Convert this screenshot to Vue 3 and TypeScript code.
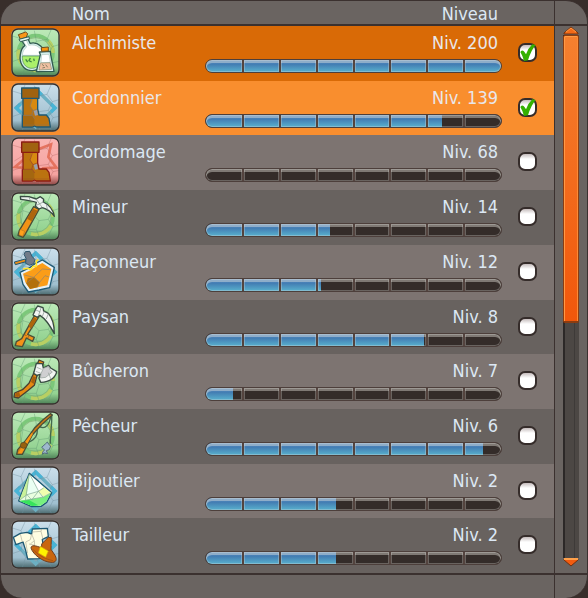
<script setup lang="ts">
import { ref } from 'vue'

type Tone = 'green' | 'blue' | 'red'

interface Shape {
  d: string
  fill?: string
  stroke?: string
  width?: number
}

interface Job {
  id: string
  name: string
  level: number
  progress: number
  tone: Tone
  shapes: Shape[]
  shown: boolean
}

const bootShapes = (line: string, seam: string): Shape[] => [
  { d: 'M36 44 H80 V78 L84 96 H106 L114 106 L118 132 H76 L70 129 L64 132 H34 V98 H36 Z', fill: '#bb7310', stroke: line, width: 4 },
  { d: 'M62 49 H78 V80 L68 84 L57 69 Z', fill: '#d88a10' },
  { d: 'M36 98 H64 L70 108 V128 L64 130 H36 Z', fill: '#a46710' },
  { d: 'M64 49 L57 69 L66 83 L62 97 M66 83 L78 78 M36 97 H64 L71 108', stroke: seam, width: 2 },
  { d: 'M68 84 L78 80 L81 96 L72 98 Z', fill: '#98a0ae' },
  { d: 'M36 126 H114', stroke: seam, width: 1 },
  { d: 'M32 15 H84 V46 H32 Z', fill: '#a06210', stroke: line, width: 4 },
]

const jobs = ref<Job[]>([
  {
    id: 'alchimiste', name: 'Alchimiste', level: 200, progress: 100, tone: 'green', shown: true,
    shapes: [
      { d: 'M30 35 L50 30 L57 46 C82 40 102 60 102 84 C102 112 82 130 60 128 C36 126 24 104 28 80 C30 66 36 56 42 52 Z', fill: '#d8f0ec', stroke: '#315a50', width: 4 },
      { d: 'M37 40 L46 37 L53 52 C78 46 94 62 95 82 L34 82 C35 70 40 62 47 57 Z', fill: '#ffffff', stroke: '#6f9c8c', width: 1 },
      { d: 'M34 84 L95 84 C94 108 78 122 60 121 C42 119 33 104 34 84 Z', fill: '#aaf06a', stroke: '#4e8860', width: 2 },
      { d: 'M44 94 L50 102 M58 90 L54 98 L62 102 M68 92 L70 99', stroke: '#3f8440', width: 4 },
      { d: 'M22 20 L44 12 L50 17 L46 28 L28 34 Z', fill: '#f99517', stroke: '#6e5020', width: 3 },
      { d: 'M24 34 L54 26 L55 34 L28 41 Z', fill: '#e0f5ef', stroke: '#315a50', width: 3 },
      { d: 'M85 72 L118 70 L119 80 L129 130 L76 131 L88 80 Z', fill: '#d8f0ec', stroke: '#315a50', width: 4 },
      { d: 'M92 80 L114 79 L118 103 L90 104 Z', fill: '#ffffff', stroke: '#6f9c8c', width: 1 },
      { d: 'M88 105 L117 104 L122 124 L84 126 Z', fill: '#efc0a2', stroke: '#8b8e72', width: 2 },
      { d: 'M93 109 L99 114 M104 110 L110 118 M94 120 L102 118', stroke: '#8a8063', width: 3 },
      { d: 'M91 59 L112 57 L112 69 L92 70 Z', fill: '#f9950f', stroke: '#6e5020', width: 3 },
    ],
  },
  { id: 'cordonnier', name: 'Cordonnier', level: 139, progress: 80, tone: 'blue', shown: true, shapes: bootShapes('#1d5874', '#7d7770') },
  { id: 'cordomage', name: 'Cordomage', level: 68, progress: 0, tone: 'red', shown: false, shapes: bootShapes('#8c1c12', '#94402c') },
  {
    id: 'mineur', name: 'Mineur', level: 14, progress: 42, tone: 'green', shown: false,
    shapes: [
      { d: 'M68 44 L84 52 L42 128 L36 136 L21 130 L25 115 Z', fill: '#f29216', stroke: '#4a4f38', width: 4 },
      { d: 'M66 50 L80 56 L62 88 L48 80 Z', fill: '#ad650d' },
      { d: 'M27 112 L41 118 L35 133 L24 128 Z', fill: '#ffa01c', stroke: '#7f5420', width: 1 },
      { d: 'M28 13 L54 14 L76 21 L88 14 L98 22 L97 30 C114 38 126 50 130 73 C118 57 106 50 94 47 L84 51 L73 42 L76 31 C60 26 44 24 29 22 Z', fill: '#eef3f0', stroke: '#384c42', width: 4 },
      { d: 'M76 22 L94 47 M76 40 L97 30 M106 38 L110 54 M54 15 L58 26', stroke: '#7b8c84', width: 2 },
    ],
  },
  {
    id: 'faconneur', name: 'Façonneur', level: 12, progress: 39, tone: 'blue', shown: false,
    shapes: [
      { d: 'M94 39 L130 61 L116 122 L84 129 L52 135 L36 112 L27 76 L56 62 L72 50 Z', fill: '#e6f1f7', stroke: '#1d5874', width: 4 },
      { d: 'M94 48 L121 66 L109 115 L80 121 L57 126 L43 106 L36 80 L62 68 L78 56 Z', fill: '#fb9d18' },
      { d: 'M50 94 L70 91 L86 106 L80 121 L57 126 L46 110 Z', fill: '#b3700c' },
      { d: 'M68 91 L94 66 M94 66 L119 68 M86 106 L102 86 L114 90 M40 84 L68 91 L86 106 L80 120 M68 91 L46 108', stroke: '#92826c', width: 2 },
      { d: 'M36 66 L50 64 L60 68 L66 58 L76 58 L76 42 L82 38', stroke: '#ffe327', width: 5 },
      { d: 'M10 45 L43 36 L45 44 L13 53 Z', fill: '#e98b18', stroke: '#1d5874', width: 3 },
      { d: 'M43 14 L56 13 L63 28 L72 38 L68 50 L56 55 L44 49 L45 34 L39 22 Z', fill: '#717b88', stroke: '#2f566c', width: 3 },
    ],
  },
  {
    id: 'paysan', name: 'Paysan', level: 8, progress: 74, tone: 'green', shown: false,
    shapes: [
      { d: 'M72 38 L84 44 L50 97 L70 106 L65 118 L46 108 L34 134 L13 131 L16 119 L32 110 Z', fill: '#f39218', stroke: '#4a4f38', width: 4 },
      { d: 'M69 46 L78 51 L62 78 L52 70 Z', fill: '#ad650d' },
      { d: 'M40 98 L47 101 M52 72 L64 80 M56 99 L50 108', stroke: '#6a5431', width: 2 },
      { d: 'M80 12 L96 17 L98 27 L112 34 C126 50 130 68 130 95 C116 68 104 51 87 40 L79 46 L66 39 L73 23 Z', fill: '#f3f5f3', stroke: '#384c42', width: 4 },
      { d: 'M90 18 L82 42 M100 28 L94 43 M112 35 L106 51 M75 24 L88 30', stroke: '#7b8c84', width: 2 },
    ],
  },
  {
    id: 'bucheron', name: 'Bûcheron', level: 7, progress: 9, tone: 'green', shown: false,
    shapes: [
      { d: 'M84 12 L98 18 L93 34 L77 62 L70 88 L52 103 L22 126 L9 123 L11 111 L36 100 L54 82 L66 56 Z', fill: '#e58a12', stroke: '#4a4032', width: 4 },
      { d: 'M66 61 L75 64 L68 84 L60 78 Z M14 112 L24 108 L28 119 L20 123 L12 120 Z', fill: '#a8600c' },
      { d: 'M76 22 L94 23 L97 36 L113 28 L119 36 L137 47 C134 64 118 78 89 79 L84 67 L88 55 L77 58 L68 52 Z', fill: '#f3f5f3', stroke: '#384c42', width: 4 },
      { d: 'M97 37 L113 31 L117 42 L124 48 L104 64 L88 66 L90 53 Z', fill: '#cfcfd1', stroke: '#8f9b96', width: 2 },
      { d: 'M77 34 L92 40 M112 50 L120 70 M74 46 L90 52', stroke: '#8f9b96', width: 2 },
    ],
  },
  {
    id: 'pecheur', name: 'Pêcheur', level: 6, progress: 94, tone: 'green', shown: false,
    shapes: [
      { d: 'M122 10 C124 40 117 66 118 98 M40 98 C70 90 82 74 78 52 M84 46 C104 58 116 40 120 12', stroke: '#43694e', width: 4 },
      { d: 'M118 8 L124 12 L95 38 L64 72 L34 130 L17 130 L20 116 L44 88 L70 52 L96 26 Z', fill: '#d07a15', stroke: '#4a4f38', width: 4 },
      { d: 'M44 90 L62 66 L66 68 L33 127 L21 127 Z', fill: '#f99716' },
      { d: 'M28 103 A10 9 0 1 0 48 103 A10 9 0 1 0 28 103', fill: '#98600f', stroke: '#4f4a29', width: 2 },
      { d: 'M104 98 L109 93 L114 101 L119 105 L115 116 L106 119 L110 128 L100 126 L94 130 L96 121 L101 117 L92 109 Z', fill: '#9eb9cd', stroke: '#526d7d', width: 3 },
    ],
  },
  {
    id: 'bijoutier', name: 'Bijoutier', level: 2, progress: 44, tone: 'blue', shown: false,
    shapes: [
      { d: 'M55 22 L122 80 L107 109 L90 121 L62 122 L23 105 Z', fill: '#e9ffe0', stroke: '#1d5874', width: 4 },
      { d: 'M54 26 L48 86 L25 103 Z', fill: '#c9f29a' },
      { d: 'M57 27 L82 76 L48 86 Z', fill: '#eafff3' },
      { d: 'M57 27 L82 76 L98 64 Z', fill: '#ffffff' },
      { d: 'M98 64 L120 80 L97 91 L82 76 Z', fill: '#f1ffae' },
      { d: 'M25 104 L58 100 L97 94 L119 82 L106 107 L89 119 L63 120 Z', fill: '#77f07f' },
      { d: 'M26 105 L54 102 L82 118 L63 120 Z', fill: '#36e45c' },
      { d: 'M55 24 L43 103 M56 24 L84 78 L97 95 M24 104 L48 86 L82 76 L98 66 M43 103 L97 93 L121 80 M48 86 L62 102 L82 76', stroke: '#7fa894', width: 2 },
    ],
  },
  {
    id: 'tailleur', name: 'Tailleur', level: 2, progress: 44, tone: 'blue', shown: false,
    shapes: [
      { d: 'M7 52 L28 40 L48 37 L62 42 L64 27 L109 25 L112 50 L94 58 L100 104 L84 116 L50 117 L44 91 L36 66 L15 74 Z', fill: '#fffde2', stroke: '#1d5874', width: 4 },
      { d: 'M28 42 L34 66 M62 42 L58 59 L44 66 M62 42 L70 62 L58 72 M70 62 L72 90 M64 36 L90 34 L96 58 M90 34 L92 27 M44 66 L50 100 M54 72 L72 76', stroke: '#b0ad9a', width: 2 },
      { d: 'M92 72 L112 52 L121 53 L120 88 L132 106 C140 120 134 129 120 127 C96 126 66 104 60 84 C60 74 74 76 92 84 Z', fill: '#c9660f', stroke: '#704024', width: 3 },
      { d: 'M92 80 C101 91 111 94 121 89 M66 88 C82 106 102 117 126 122', stroke: '#954b13', width: 2 },
      { d: 'M88 79 L112 93 L104 112 L82 99 Z', fill: '#fff200', stroke: '#d79b10', width: 2 },
    ],
  },
])

const cracks =
  'M4 24 L30 32 L42 6 M30 32 L36 56 L10 72 M36 56 L62 64 L76 40 L70 8 M76 40 L108 34 L120 6 M108 34 L124 56 L144 50 M124 56 L112 82 L84 86 L62 64 M84 86 L76 112 L44 112 L30 92 L36 56 M76 112 L88 144 M112 82 L126 104 L144 100 M126 104 L114 128 L122 144 M44 112 L34 142 M30 92 L6 100'
</script>

<template>
  <main class="panel">
    <table class="jobs">
      <thead>
        <tr class="row head">
          <th class="head-name" scope="col">Nom</th>
          <th class="head-level" scope="col">Niveau</th>
        </tr>
      </thead>
      <tbody>
        <tr v-for="job in jobs" :key="job.id" class="row job">
          <td class="cell-icon">
            <svg class="icon" :class="job.tone" viewBox="0 0 147 147" aria-hidden="true">
              <defs>
                <linearGradient :id="`tile-${job.id}`" x1="0" y1="0" x2="0" y2="1">
                  <stop class="stop-top" offset="0" />
                  <stop class="stop-mid" offset="0.78" />
                  <stop class="stop-end" offset="1" />
                </linearGradient>
              </defs>
              <rect x="1" y="1" width="145" height="145" rx="20" fill="none" stroke="#a39a92" stroke-width="2" />
              <rect x="3" y="3" width="141" height="141" rx="18" :fill="`url(#tile-${job.id})`" />
              <g v-if="job.tone === 'green'" fill="none" stroke-width="11">
                <circle cx="74" cy="75" r="52" stroke="#7cc87a" />
                <path d="M112 39 A52 52 0 0 1 126 75 M120 101 A52 52 0 0 1 60 125 M38 114 A52 52 0 0 1 23 64" stroke="#b9cf63" />
                <circle cx="74" cy="75" r="46" stroke="#7fae72" stroke-width="2" />
              </g>
              <g v-else-if="job.tone === 'blue'" fill="none" stroke-width="10">
                <path d="M74 18 L132 75 L74 132 L16 75 Z" stroke="#6cb0c3" />
                <path d="M54 38 L74 18 L92 36 M120 63 L132 75 L120 87 M30 89 L16 75 L28 63" stroke="#48b4d6" />
              </g>
              <path v-else d="M74 40 L120 22 L112 60 L136 92 L96 94 L74 128 L56 94 L12 90 L40 66 L34 34 Z" fill="none" stroke="#e5735f" stroke-width="8" />
              <path class="cracks" :d="cracks" />
              <path
                v-for="(shape, i) in job.shapes"
                :key="i"
                :d="shape.d"
                :fill="shape.fill ?? 'none'"
                :stroke="shape.stroke ?? 'none'"
                :stroke-width="shape.width ?? 0"
                stroke-linejoin="round"
              />
              <rect x="3" y="3" width="141" height="141" rx="18" fill="none" stroke="#37302e" stroke-width="4" />
            </svg>
          </td>
          <td class="cell-name">{{ job.name }}</td>
          <td class="cell-level">Niv. {{ job.level }}</td>
          <td class="cell-bar">
            <div class="bar" role="progressbar" :aria-label="job.name" :aria-valuenow="job.progress" aria-valuemin="0" aria-valuemax="100">
              <div class="fill" :style="{ width: job.progress + '%' }"></div>
              <div class="segments"><span v-for="n in 8" :key="n" class="segment"></span></div>
            </div>
          </td>
          <td class="cell-check">
            <label class="check">
              <input v-model="job.shown" type="checkbox" :aria-label="job.name" />
              <svg v-if="job.shown" class="tick" viewBox="0 0 57 57" aria-hidden="true">
                <path d="M7 27 Q14 18 20 28 L24 34 Q31 15 43 4 L53 6 Q39 22 30 52 L18 54 Q14 38 7 27 Z" fill="#34b000" />
              </svg>
            </label>
          </td>
        </tr>
      </tbody>
    </table>
    <div class="rail">
      <div class="rail-head"></div>
      <div class="scroll">
        <button class="arrow" type="button" aria-label="Monter">
          <svg viewBox="0 0 16 9" aria-hidden="true">
            <path d="M8 1 L15 7 V8 H1 V7 Z" fill="#f36a18" stroke="#70300f" />
            <path d="M3 6 L8 2 L13 6" fill="none" stroke="#ff9a45" />
          </svg>
        </button>
        <div class="track"><div class="thumb"></div></div>
        <button class="arrow" type="button" aria-label="Descendre">
          <svg viewBox="0 0 16 9" aria-hidden="true">
            <path d="M8 8 L15 2 V1 H1 V2 Z" fill="#f35c10" stroke="#70300f" />
            <path d="M1 1 H15" stroke="#ffa04a" stroke-width="2" />
          </svg>
        </button>
      </div>
    </div>
    <div class="foot"></div>
    <div class="foot foot-rail"></div>
  </main>
</template>

<style>
body {
  margin: 0;
  background: #382e2b;
}
</style>

<style scoped>
.panel {
  box-sizing: border-box;
  min-height: 100vh;
  display: grid;
  grid-template-columns: 1fr 33px;
  grid-template-rows: 1fr 25px;
  border: 1px solid #3b312f;
  border-bottom: 0;
  border-radius: 22px;
  overflow: hidden;
  background: #6a6461;
  color: #dce8f4;
  font-family: 'DejaVu Sans Condensed', 'Noto Sans', sans-serif;
  font-size: 18px;
  line-height: 22px;
}

.jobs {
  display: flex;
  flex-direction: column;
}

thead {
  display: block;
}

tbody {
  flex: 1;
  display: grid;
  grid-auto-rows: 1fr;
}

.row {
  display: grid;
  grid-template-columns: 71px 133px 1fr 56px;
}

.head {
  box-sizing: border-box;
  height: 25px;
  grid-template-columns: 71px 1fr 1fr 56px;
  border-bottom: 2px solid #3b312f;
}

th,
td {
  padding: 0;
  font-weight: normal;
}

.head-name {
  grid-column: 2;
  padding-top: 2px;
  text-align: left;
}

.head-level {
  grid-column: 3;
  padding-top: 2px;
  text-align: right;
}

.job {
  grid-template-rows: 33px 1fr;
  background: #68625f;
}

.job:nth-child(odd) {
  background: #7d7471;
}

.job:nth-child(1) {
  background: #d96a06;
  color: #e9e7ea;
}

.job:nth-child(2) {
  background: #f98e2e;
  color: #e9e7ea;
}

.cell-icon {
  grid-row: 1 / 3;
  padding: 2px 0 0 10px;
}

.icon {
  display: block;
  width: 49px;
  height: 49px;
}

.green .stop-top {
  stop-color: #bdeab9;
}

.green .stop-mid {
  stop-color: #94d392;
}

.green .stop-end {
  stop-color: #4c8056;
}

.blue .stop-top {
  stop-color: #cbdfeb;
}

.blue .stop-mid {
  stop-color: #9fbfcf;
}

.blue .stop-end {
  stop-color: #49686c;
}

.red .stop-top {
  stop-color: #f9b5b3;
}

.red .stop-mid {
  stop-color: #f5a3a0;
}

.red .stop-end {
  stop-color: #8b4543;
}

.cracks {
  fill: none;
  stroke: #5f9a72;
  stroke-width: 2;
  opacity: 0.6;
}

.blue .cracks {
  stroke: #71919f;
}

.red .cracks {
  stroke: #b96a67;
}

.cell-name {
  grid-column: 2;
  grid-row: 1;
  padding-top: 6px;
}

.cell-level {
  grid-column: 3;
  grid-row: 1;
  padding-top: 6px;
  text-align: right;
}

.cell-bar {
  grid-column: 3;
  grid-row: 2;
  margin-right: -4px;
}

.bar {
  box-sizing: border-box;
  height: 14px;
  display: grid;
  border: 1px solid #4d3f3b;
  border-radius: 7px;
  overflow: hidden;
  background: #342c29;
}

.fill {
  grid-area: 1 / 1;
  background: linear-gradient(#4f86bb 0 3px, #427bb2 4px, #56aaca 11px);
}

.segments {
  grid-area: 1 / 1;
  display: grid;
  grid-template-columns: repeat(8, 1fr);
}

.segment {
  box-shadow:
    inset 0 0 0 1px rgba(230, 228, 222, 0.3),
    inset 0 3px 0 rgba(230, 228, 222, 0.42);
}

.segment:not(:first-child) {
  border-left: 1px solid #54443f;
}

.segment:not(:last-child) {
  border-right: 1px solid #54443f;
}

.segment:first-child {
  border-radius: 6px 0 0 6px;
}

.segment:last-child {
  border-radius: 0 6px 6px 0;
}

.cell-check {
  grid-column: 4;
  grid-row: 1 / 3;
  padding: 17px 0 0 20px;
}

.check {
  display: grid;
  width: 19px;
  height: 19px;
}

.check input {
  grid-area: 1 / 1;
  box-sizing: border-box;
  appearance: none;
  width: 19px;
  height: 19px;
  margin: 0;
  border: 2px solid #352c2a;
  border-radius: 7px;
  background: linear-gradient(#c6bdbd, #ffffff 5px);
}

.tick {
  grid-area: 1 / 1;
  width: 19px;
  height: 19px;
  pointer-events: none;
}

.rail {
  display: flex;
  flex-direction: column;
  border-left: 1px solid #3b312f;
}

.rail-head {
  box-sizing: border-box;
  height: 25px;
  border-bottom: 2px solid #3b312f;
}

.scroll {
  flex: 1;
  display: flex;
  flex-direction: column;
  padding: 0 8px 6px;
}

.arrow {
  display: block;
  width: 16px;
  height: 9px;
  padding: 0;
  border: 0;
  background: none;
}

.arrow svg {
  display: block;
}

.track {
  flex: 1;
  width: 16px;
  background: linear-gradient(90deg, #2c2827 0 2px, #4c4744 2px 11px, #3e3a38 11px 12px, #4c4744 12px);
}

.thumb {
  box-sizing: border-box;
  height: 55%;
  border: 1px solid #8c3c10;
  border-bottom-width: 2px;
  border-radius: 2px;
  box-shadow: inset 1px 1px 0 #ff9a45, inset -1px 0 0 #fb8b35;
  background: linear-gradient(#f5802f, #f1570b);
}

.foot {
  border-top: 2px solid #3b312f;
}

.foot-rail {
  border-left: 1px solid #3b312f;
}
</style>
